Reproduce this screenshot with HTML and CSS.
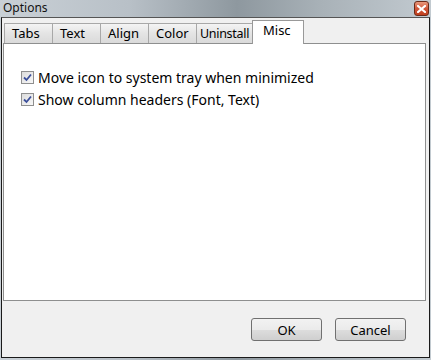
FILE: index.html
```html
<!DOCTYPE html>
<html>
<head>
  <meta charset="utf-8">
  <title>Options</title>
  <link rel="stylesheet" href="styles.css">
</head>
<body>
  <div class="window">
    <div class="titlebar">
      <span class="title">Options</span>
      <button class="close" aria-label="Close">
        <svg width="9" height="8" viewBox="0 0 9 8">
          <path d="M1 1 L8 7 M8 1 L1 7" stroke="#fff" stroke-width="2.2" stroke-linecap="square"/>
        </svg>
      </button>
    </div>

    <div class="body">
      <div class="tabs">
        <div class="tab">Tabs</div>
        <div class="tab">Text</div>
        <div class="tab">Align</div>
        <div class="tab">Color</div>
        <div class="tab wide">Uninstall</div>
        <div class="tab active">Misc</div>
      </div>

      <div class="panel">
        <div class="checkbox-group">
          <span class="check"><svg width="9" height="9" viewBox="0 0 9 9"><path d="M1 4.5 L3.5 7 L8 1.5" fill="none" stroke="#3b4f9a" stroke-width="1.8"/></svg></span>
          <label>Move icon to system tray when minimized</label>
        </div>
        <div class="checkbox-group">
          <span class="check"><svg width="9" height="9" viewBox="0 0 9 9"><path d="M1 4.5 L3.5 7 L8 1.5" fill="none" stroke="#3b4f9a" stroke-width="1.8"/></svg></span>
          <label>Show column headers (Font, Text)</label>
        </div>
      </div>

      <div class="actions">
        <button class="btn">OK</button>
        <button class="btn">Cancel</button>
      </div>
    </div>
  </div>
</body>
</html>
```

FILE: styles.css
```css
body {
  margin: 0;
  width: 431px;
  height: 360px;
  overflow: hidden;
  font-family: "Noto Sans", "DejaVu Sans", sans-serif;
  color: #000;
  background: #fff;
}

.window {
  height: 360px;
  display: flex;
  flex-direction: column;
  background: linear-gradient(90deg, #c9d0d6 0%, #b8c0c7 30%, #8e989f 55%, #a9b2b8 75%, #c2cad0 100%);
}

.titlebar {
  height: 17px;
  display: flex;
  align-items: flex-start;
  justify-content: space-between;
  padding: 0 2px 0 3px;
}

.title {
  font-size: 12px;
  line-height: 15px;
  color: #111;
}

.close {
  width: 15px;
  height: 15px;
  margin-top: 1px;
  padding: 0;
  border: 1px solid #6b2a18;
  border-radius: 3px;
  background: linear-gradient(#e99a7e, #d0573a 50%, #c0401f);
  display: flex;
  align-items: center;
  justify-content: center;
}

.body {
  flex: 1;
  margin: 0 1px 2px 1px;
  border: 1px solid #1a1a1a;
  border-top-color: #555;
  background: #f0f0f0;
  display: flex;
  flex-direction: column;
  padding: 0 3px 0 1px;
}

.tabs {
  display: flex;
  align-items: flex-end;
  height: 25px;
  padding-left: 1px;
  position: relative;
  z-index: 1;
}

.tab {
  box-sizing: border-box;
  width: 49px;
  height: 20px;
  border: 1px solid #a8a8a8;
  border-bottom: none;
  background: linear-gradient(#f4f4f4, #e4e4e4 50%, #dadada);
  font-size: 13px;
  line-height: 19px;
  padding-left: 7px;
  margin-right: -1px;
  white-space: nowrap;
}

.tab.wide {
  width: 57px;
  padding-left: 3px;
  font-size: 12.5px;
  letter-spacing: -0.3px;
}

.tab.active {
  width: 52px;
  height: 24px;
  padding-left: 10px;
  background: #fff;
  border-color: #999;
  line-height: 18px;
  margin-bottom: -1px;
}

.panel {
  height: 258px;
  border: 1px solid #8e8f8f;
  background: #fff;
  padding: 22px 0 0 17px;
  box-sizing: border-box;
}

.checkbox-group {
  display: flex;
  align-items: center;
  height: 22px;
}

.check {
  width: 11px;
  height: 11px;
  border: 1px solid #8f8f8f;
  background: linear-gradient(135deg, #dcdcdc, #f8f8f8);
  display: flex;
  align-items: center;
  justify-content: center;
  margin-right: 4px;
}

.checkbox-group label {
  font-size: 14px;
  color: #000;
}

.actions {
  display: flex;
  justify-content: flex-end;
  gap: 13px;
  padding: 17px 20px 0 0;
}

.btn {
  width: 71px;
  height: 23px;
  border: 1px solid #707070;
  border-radius: 3px;
  background: linear-gradient(#f2f2f2, #ebebeb 50%, #dddddd 51%, #cfcfcf);
  font-family: "Noto Sans", sans-serif;
  font-size: 13px;
  padding: 0;
}
```
